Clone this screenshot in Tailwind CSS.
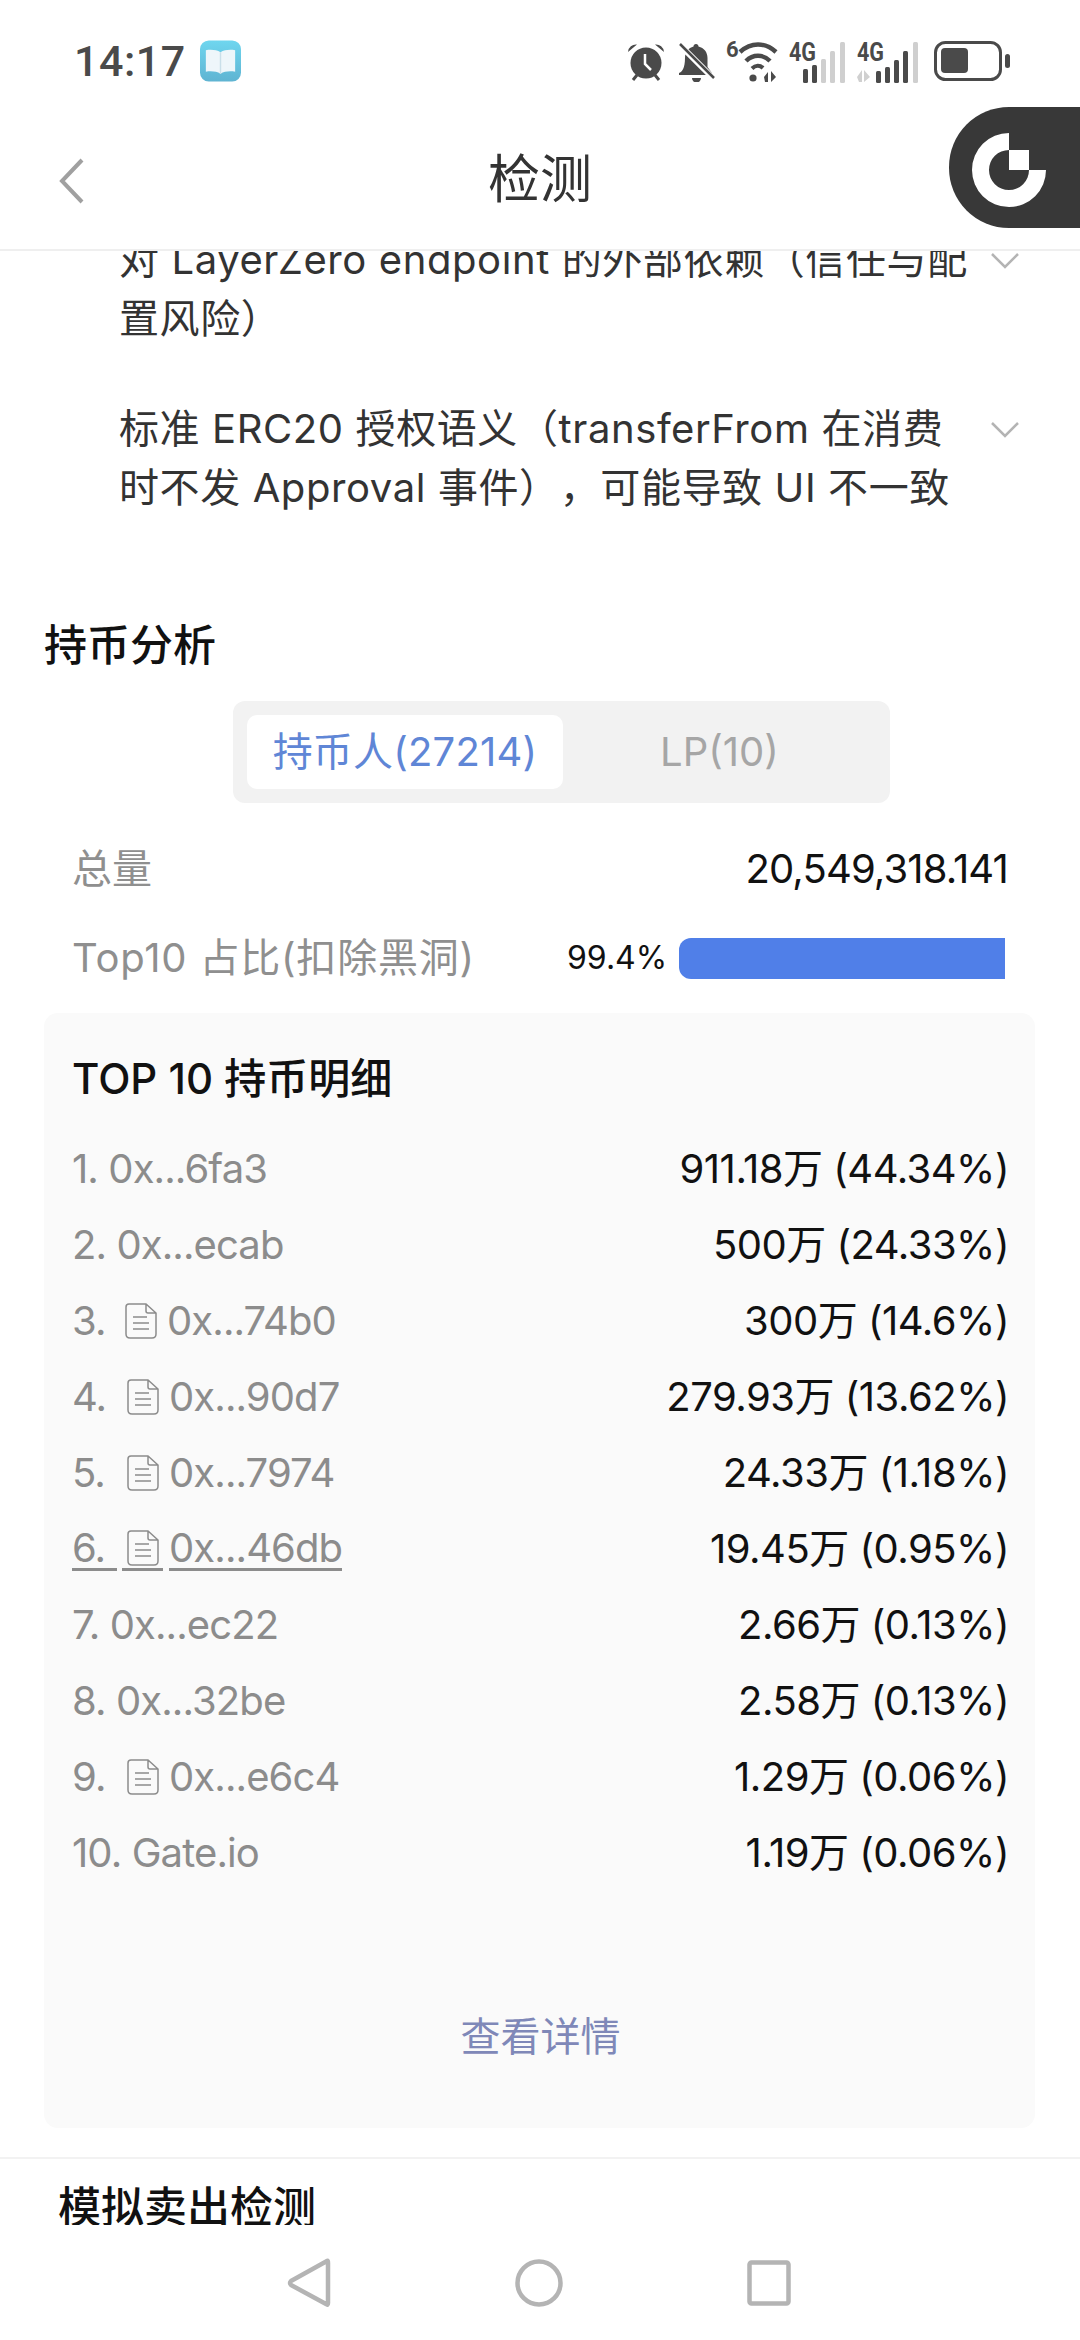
<!DOCTYPE html>
<html lang="zh-CN">
<head>
  <meta charset="UTF-8" />
  <meta name="viewport" content="width=device-width, initial-scale=1.0"/>
  <title>检测</title>
  <script src="https://cdn.jsdelivr.net/npm/@tailwindcss/browser@4"></script>
</head>
<body class="bg-white">
<div class="relative w-[1080px] h-[2340px] flex flex-col overflow-hidden bg-white font-['Inter','Noto_Sans_CJK_SC',sans-serif] [text-spacing-trim:space-all]">

  <!-- Status bar -->
  <div class="h-[107px] shrink-0 flex items-start justify-between pl-[74px] pr-[70px] pt-[38px]">
    <div class="flex items-center gap-[14px] h-[46px]">
      <span class="font-['Roboto',sans-serif] font-medium text-[43px] leading-none tracking-[0.5px] text-[#4a4a4a]">14:17</span>
      <svg width="41" height="42" viewBox="0 0 42 42">
        <defs><linearGradient id="bk" x1="0" y1="0" x2="0" y2="1"><stop offset="0" stop-color="#6fd6ef"/><stop offset="1" stop-color="#5fb4d2"/></linearGradient></defs>
        <rect width="42" height="42" rx="9" fill="url(#bk)"/>
        <path d="M21 12C17 9.500 11 9 6 10V32C11 31 17 31.500 21 34C25 31.500 31 31 36 32V10C31 9 25 9.500 21 12Z" fill="#eef6fa"/>
        <path d="M21 12V34" stroke="#c9dfe9" stroke-width="1.500"/>
      </svg>
    </div>
    <div class="flex items-center h-[44px] mt-[2px] text-[#4a4a4a]">
      <!-- alarm -->
      <svg width="40" height="40" viewBox="0 0 40 40" class="mr-[12px]">
        <circle cx="20" cy="21" r="15.500" fill="#4a4a4a"/>
        <path d="M2 10A8 8 0 0 1 11 2.500ZM38 10A8 8 0 0 0 29 2.500Z" fill="#4a4a4a"/>
        <path d="M7 38L11 33M33 38L29 33" stroke="#4a4a4a" stroke-width="3"/>
        <path d="M19 12V22L25 28" fill="none" stroke="#fff" stroke-width="2.500"/>
      </svg>
      <!-- bell off -->
      <svg width="38" height="40" viewBox="0 0 38 40" class="mr-[10px]">
        <path d="M18 2C19.500 2 20.500 3 20.500 4.500C26 6 29.500 10 29.500 16V25L34 31V33H1V31C4 30 7 26 7 16C7 10 10.500 6 15.500 4.500C15.500 3 16.500 2 18 2Z" fill="#4a4a4a"/>
        <path d="M14 36H23A4.500 4.500 0 0 1 14 36Z" fill="#4a4a4a"/>
        <path d="M1 2L35 36" stroke="#fff" stroke-width="6"/>
        <path d="M2 2L36 36" stroke="#4a4a4a" stroke-width="2.500"/>
      </svg>
      <!-- wifi 6 -->
      <svg width="52" height="50" viewBox="0 -8 52 50" class="mr-[11px] -mt-[8px]">
        <text x="0" y="16" font-family="Roboto" font-weight="700" font-size="22" fill="#4a4a4a">6</text>
        <path d="M14 11C25 1 39 1 50 11M20 20C27 13 37 13 44 20" fill="none" stroke="#4a4a4a" stroke-width="4.500"/>
        <path d="M26 27.500C29.500 24 34 24 37 27" fill="none" stroke="#4a4a4a" stroke-width="4"/>
        <circle cx="27" cy="37" r="3.600" fill="#4a4a4a"/>
        <path d="M38 36L42 31V41H39ZM45 30V41L50 36Z" fill="#4a4a4a"/>
      </svg>
      <!-- sim 1 -->
      <svg width="57" height="50" viewBox="0 -8 57 50" class="mr-[11px] -mt-[8px]">
        <text x="0" y="20" font-family="Roboto" font-weight="700" font-size="25" textLength="27" lengthAdjust="spacingAndGlyphs" fill="#4a4a4a">4G</text>
        <rect x="14" y="28" width="5" height="14" rx="1.500" fill="#4a4a4a"/>
        <rect x="23" y="24" width="5" height="18" rx="1.500" fill="#4a4a4a"/>
        <rect x="32" y="18" width="5" height="24" rx="1.500" fill="#cfcfcf"/>
        <rect x="41" y="10" width="5" height="32" rx="1.500" fill="#cfcfcf"/>
        <rect x="51" y="1" width="5" height="41" rx="1.500" fill="#cfcfcf"/>
      </svg>
      <!-- sim 2 -->
      <svg width="63" height="50" viewBox="0 -8 63 50" class="mr-[14px] -mt-[8px]">
        <text x="0" y="20" font-family="Roboto" font-weight="700" font-size="25" textLength="27" lengthAdjust="spacingAndGlyphs" fill="#4a4a4a">4G</text>
        <path d="M0 36L5 29V41H2ZM7 29V41L13 36Z" fill="#d0d0d0"/>
        <rect x="19" y="30" width="5" height="12" rx="1.500" fill="#4a4a4a"/>
        <rect x="28" y="26" width="5" height="16" rx="1.500" fill="#4a4a4a"/>
        <rect x="37" y="19" width="5" height="23" rx="1.500" fill="#4a4a4a"/>
        <rect x="46" y="10" width="5" height="32" rx="1.500" fill="#4a4a4a"/>
        <rect x="56" y="1" width="5" height="41" rx="1.500" fill="#cfcfcf"/>
      </svg>
      <!-- battery -->
      <svg width="76" height="42" viewBox="0 0 76 42">
        <rect x="1.500" y="1.500" width="65" height="37" rx="10" fill="none" stroke="#4a4a4a" stroke-width="3"/>
        <rect x="7" y="7" width="27" height="25" rx="4" fill="#4a4a4a"/>
        <rect x="71" y="13" width="5" height="14" rx="2.500" fill="#4a4a4a"/>
      </svg>
    </div>
  </div>

  <!-- Header -->
  <header class="relative z-10 h-[144px] shrink-0 bg-white border-b-2 border-[#efefef] flex items-center justify-center">
    <svg width="26" height="46" viewBox="0 0 26 46" class="absolute left-[59px] top-[51px]">
      <path d="M23 2L3 23L23 44" fill="none" stroke="#a0a0a0" stroke-width="4"/>
    </svg>
    <h1 class="text-[52px] leading-none font-normal text-[#333] pt-[4px]">检测</h1>
    <!-- floating logo pill -->
    <div class="absolute right-0 top-0 w-[131px] h-[121px] rounded-l-[60px] bg-[#383838]">
      <svg width="76" height="76" viewBox="0 0 76 76" class="absolute left-[23px] top-[25px]">
        <path d="M37 1A37 37 0 1 0 74 38H57A20 20 0 1 1 37 18Z" fill="#fff"/>
        <rect x="37" y="18" width="20" height="20" fill="#fff"/>
      </svg>
    </div>
  </header>

  <!-- Scroll content -->
  <main class="flex-1 min-h-0 overflow-hidden">
    <div class="-mt-[21px]">

      <!-- Risk items -->
      <div class="pl-[119px] pr-[60px] text-[40px] leading-[59px] tracking-[0.6px] text-[#333]">
        <div class="flex justify-between items-start">
          <p class="whitespace-nowrap">对 LayerZero endpoint 的外部依赖（信任与配<br>置风险）</p>
          <svg width="30" height="18" viewBox="0 0 30 18" class="mt-[22px]"><path d="M2 2L15 15L28 2" fill="none" stroke="#b4b4b4" stroke-width="2.500"/></svg>
        </div>
        <div class="flex justify-between items-start mt-[51px]">
          <p class="whitespace-nowrap">标准 ERC20 授权语义（transferFrom 在消费<br>时不发 Approval 事件），可能导致 UI 不一致</p>
          <svg width="30" height="18" viewBox="0 0 30 18" class="mt-[22px]"><path d="M2 2L15 15L28 2" fill="none" stroke="#b4b4b4" stroke-width="2.500"/></svg>
        </div>
      </div>

      <!-- Holder analysis -->
      <section class="mt-[98px]">
        <h2 class="pl-[44px] text-[43px] leading-[60px] font-medium text-[#111]">持币分析</h2>

        <div class="mt-[26px] ml-[233px] w-[657px] h-[102px] rounded-[12px] bg-[#f2f2f2] p-[14px] flex">
          <div class="w-[316px] h-[74px] rounded-[10px] bg-white flex items-center justify-center text-[40px] tracking-[0.2px] text-[#5f86d6]">持币人(27214)</div>
          <div class="flex-1 flex items-center justify-center text-[40px] text-[#a6a6a6]">LP(10)</div>
        </div>

        <div class="mt-[36px] pl-[72px] pr-[72px] flex justify-between items-center h-[60px] text-[40px]">
          <span class="text-[#8f8f8f]">总量</span>
          <span class="text-[#111] tracking-[-0.85px]">20,549,318.141</span>
        </div>

        <div class="mt-[29px] pl-[72px] pr-[74px] flex items-center h-[60px]">
          <span class="w-[495px] text-[40px] tracking-[0.8px] text-[#8f8f8f]">Top10 占比(扣除黑洞)</span>
          <span class="w-[112px] text-[32px] text-[#111]">99.4%</span>
          <div class="w-[326px] h-[41px] rounded-l-[12px] bg-[#507fe8]"></div>
        </div>

        <!-- Top 10 card -->
        <div class="mt-[25px] mx-[44px] w-[991px] h-[1115px] rounded-[14px] bg-[#fafafa] pt-[36px] pl-[28px] pr-[26px]">
          <h3 class="text-[42px] leading-[60px] font-medium text-[#111]">TOP 10 持币明细</h3>
          <ul class="mt-[22px] text-[40px] tracking-[-0.9px] text-[#8c8c8c]">
            <li class="h-[76px] flex justify-between items-center"><span>1. 0x...6fa3</span><span class="text-[#111] tracking-[-0.5px]">911.18万 (44.34%)</span></li>
            <li class="h-[76px] flex justify-between items-center"><span>2. 0x...ecab</span><span class="text-[#111] tracking-[-0.5px]">500万 (24.33%)</span></li>
            <li class="h-[76px] flex justify-between items-center">
              <span class="flex items-center gap-[5px]"><span class="w-[43px]">3.</span><span class="w-[41px] flex justify-center"><svg width="32" height="36" viewBox="0 0 32 36"><path d="M4 1H21L31 10V31Q31 35 27 35H5Q1 35 1 31V4Q1 1 4 1ZM21 1V8Q21 10 23 10H31M8 14H22M8 20H24M8 26H24" fill="none" stroke="#8c8c8c" stroke-width="1.500"/></svg></span><span class="ml-[1px]">0x...74b0</span></span>
              <span class="text-[#111] tracking-[-0.5px]">300万 (14.6%)</span>
            </li>
            <li class="h-[76px] flex justify-between items-center">
              <span class="flex items-center gap-[5px]"><span class="w-[45px]">4.</span><span class="w-[41px] flex justify-center"><svg width="32" height="36" viewBox="0 0 32 36"><path d="M4 1H21L31 10V31Q31 35 27 35H5Q1 35 1 31V4Q1 1 4 1ZM21 1V8Q21 10 23 10H31M8 14H22M8 20H24M8 26H24" fill="none" stroke="#8c8c8c" stroke-width="1.500"/></svg></span><span class="ml-[1px]">0x...90d7</span></span>
              <span class="text-[#111] tracking-[-0.5px]">279.93万 (13.62%)</span>
            </li>
            <li class="h-[76px] flex justify-between items-center">
              <span class="flex items-center gap-[5px]"><span class="w-[45px]">5.</span><span class="w-[41px] flex justify-center"><svg width="32" height="36" viewBox="0 0 32 36"><path d="M4 1H21L31 10V31Q31 35 27 35H5Q1 35 1 31V4Q1 1 4 1ZM21 1V8Q21 10 23 10H31M8 14H22M8 20H24M8 26H24" fill="none" stroke="#8c8c8c" stroke-width="1.500"/></svg></span><span class="ml-[1px]">0x...7974</span></span>
              <span class="text-[#111] tracking-[-0.5px]">24.33万 (1.18%)</span>
            </li>
            <li class="h-[76px] flex justify-between items-center">
              <span class="flex items-center gap-[5px]"><span class="w-[45px] h-[44px] flex items-center border-b-[3px] border-[#8c8c8c]">6.</span><span class="w-[41px] h-[44px] flex justify-center items-center border-b-[3px] border-[#8c8c8c]"><svg width="32" height="36" viewBox="0 0 32 36"><path d="M4 1H21L31 10V31Q31 35 27 35H5Q1 35 1 31V4Q1 1 4 1ZM21 1V8Q21 10 23 10H31M8 14H22M8 20H24M8 26H24" fill="none" stroke="#8c8c8c" stroke-width="1.500"/></svg></span><span class="ml-[1px] h-[44px] flex items-center border-b-[3px] border-[#8c8c8c]">0x...46db</span></span>
              <span class="text-[#111] tracking-[-0.5px]">19.45万 (0.95%)</span>
            </li>
            <li class="h-[76px] flex justify-between items-center"><span>7. 0x...ec22</span><span class="text-[#111] tracking-[-0.5px]">2.66万 (0.13%)</span></li>
            <li class="h-[76px] flex justify-between items-center"><span>8. 0x...32be</span><span class="text-[#111] tracking-[-0.5px]">2.58万 (0.13%)</span></li>
            <li class="h-[76px] flex justify-between items-center">
              <span class="flex items-center gap-[5px]"><span class="w-[45px]">9.</span><span class="w-[41px] flex justify-center"><svg width="32" height="36" viewBox="0 0 32 36"><path d="M4 1H21L31 10V31Q31 35 27 35H5Q1 35 1 31V4Q1 1 4 1ZM21 1V8Q21 10 23 10H31M8 14H22M8 20H24M8 26H24" fill="none" stroke="#8c8c8c" stroke-width="1.500"/></svg></span><span class="ml-[1px]">0x...e6c4</span></span>
              <span class="text-[#111] tracking-[-0.5px]">1.29万 (0.06%)</span>
            </li>
            <li class="h-[76px] flex justify-between items-center"><span>10. Gate.io</span><span class="text-[#111] tracking-[-0.5px]">1.19万 (0.06%)</span></li>
          </ul>
          <div class="mt-[116px] text-center text-[40px] leading-[60px] text-[#7f88b8]">查看详情</div>
        </div>
      </section>

      <!-- Sell simulation -->
      <section class="mt-[29px] border-t-2 border-[#f2f2f2] pt-[22px] pl-[58px]">
        <h2 class="text-[43px] leading-[52px] font-medium text-[#111]">模拟卖出检测</h2>
      </section>
    </div>
  </main>

  <!-- Nav bar -->
  <nav class="h-[115px] shrink-0 bg-white relative">
    <div class="ml-[287px] mt-[33px] w-[504px] flex justify-between items-center">
      <svg width="44" height="50" viewBox="0 0 44 50"><path d="M40 3Q41 2 41 5V45Q41 48 39 46L4 27Q2 25 4 23Z" fill="none" stroke="#b4b4b4" stroke-width="4.500" stroke-linejoin="round"/></svg>
      <svg width="48" height="48" viewBox="0 0 48 48"><circle cx="24" cy="24" r="21.500" fill="none" stroke="#b4b4b4" stroke-width="4.500"/></svg>
      <svg width="44" height="46" viewBox="0 0 44 46"><rect x="2.500" y="2.500" width="39" height="41" rx="2" fill="none" stroke="#b4b4b4" stroke-width="4.500"/></svg>
    </div>
  </nav>
</div>
</body>
</html>
